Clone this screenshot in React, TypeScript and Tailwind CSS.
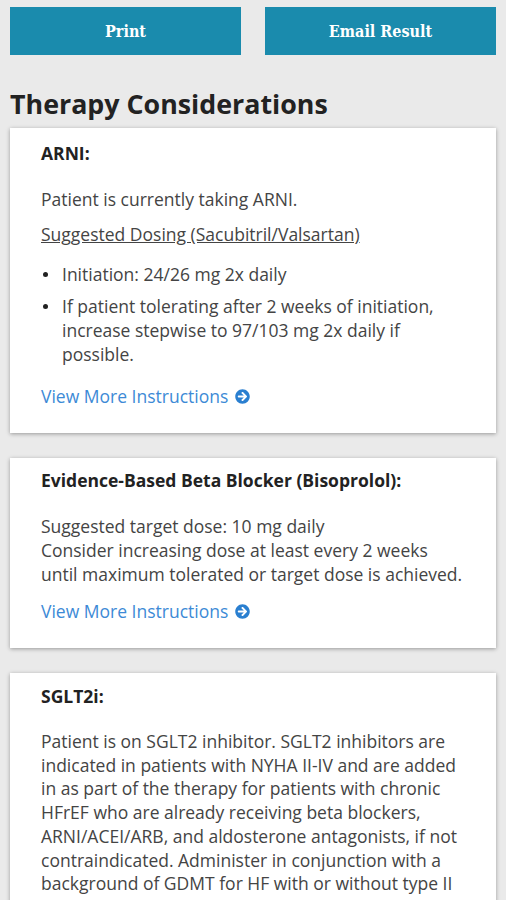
import React from "react";
import { FaArrowCircleRight } from "react-icons/fa";

const body = { fontFamily: '"Open Sans", "Noto Sans", sans-serif' };
const slab = { fontFamily: '"DejaVu Serif Condensed", "DejaVu Serif", "Liberation Serif", serif' };

function ViewMore() {
  return (
    <div className="flex items-center gap-[7px] text-[#3d8ad6] text-[17.5px] leading-[24px]">
      <span>View More Instructions</span>
      <FaArrowCircleRight className="w-[15px] h-[15px] text-[#2a7fd0]" />
    </div>
  );
}

function Bullet({ children }: { children: React.ReactNode }) {
  return (
    <li className="flex">
      <span className="w-[21px] shrink-0 flex items-start pt-[10px] pl-[2px]">
        <span className="block w-[5px] h-[5px] rounded-full bg-[#222]" />
      </span>
      <span>{children}</span>
    </li>
  );
}

export default function App() {
  return (
    <div className="min-h-[900px] bg-[#eaeaea] text-[#444]" style={body}>
      <div className="flex justify-between px-[10px] pt-[7px]">
        <button className="w-[231px] h-[48px] bg-[#1a8bad] text-white font-bold text-[16px] pt-[2px]" style={slab}>
          Print
        </button>
        <button className="w-[231px] h-[48px] bg-[#1a8bad] text-white font-bold text-[16px] pt-[2px]" style={slab}>
          Email Result
        </button>
      </div>
      <h1 className="px-[10px] mt-[33px] text-[26.8px] leading-[32px] font-bold text-[#222]">
        Therapy Considerations
      </h1>
      <div className="px-[10px] mt-[8px] flex flex-col gap-[25px] pb-[30px]">
        <div className="bg-white shadow-[0_1px_4px_rgba(0,0,0,0.35)] pl-[31px] pr-[30px] pt-[13px] pb-[25px] text-[17.5px] leading-[24px]">
          <div className="font-bold text-[#222]">ARNI:</div>
          <div className="mt-[22px]">Patient is currently taking ARNI.</div>
          <div className="mt-[11px] underline">Suggested Dosing (Sacubitril/Valsartan)</div>
          <ul className="mt-[16px] flex flex-col gap-[8px]">
            <Bullet>Initiation: 24/26 mg 2x daily</Bullet>
            <Bullet>
              If patient tolerating after 2 weeks of initiation, increase stepwise to 97/103 mg 2x daily if possible.
            </Bullet>
          </ul>
          <div className="mt-[18px]">
            <ViewMore />
          </div>
        </div>
        <div className="bg-white shadow-[0_1px_4px_rgba(0,0,0,0.35)] pl-[31px] pr-[30px] pt-[10px] pb-[25px] text-[17.5px] leading-[24px]">
          <div className="font-bold text-[#222]">Evidence-Based Beta Blocker (Bisoprolol):</div>
          <div className="mt-[22px]">
            Suggested target dose: 10 mg daily
            <br />
            Consider increasing dose at least every 2 weeks until maximum tolerated or target dose is achieved.
          </div>
          <div className="mt-[13px]">
            <ViewMore />
          </div>
        </div>
        <div className="bg-white shadow-[0_1px_4px_rgba(0,0,0,0.35)] pl-[31px] pr-[30px] pt-[11px] pb-[25px] text-[17.5px] leading-[24px]">
          <div className="font-bold text-[#222]">SGLT2i:</div>
          <div className="mt-[22px] leading-[23.7px]">
            Patient is on SGLT2 inhibitor. SGLT2 inhibitors are indicated in patients with NYHA II-IV and are added in as part of the therapy for patients with chronic HFrEF who are already receiving beta blockers, ARNI/ACEI/ARB, and aldosterone antagonists, if not contraindicated. Administer in conjunction with a background of GDMT for HF with or without type II diabetes.
          </div>
        </div>
      </div>
    </div>
  );
}
